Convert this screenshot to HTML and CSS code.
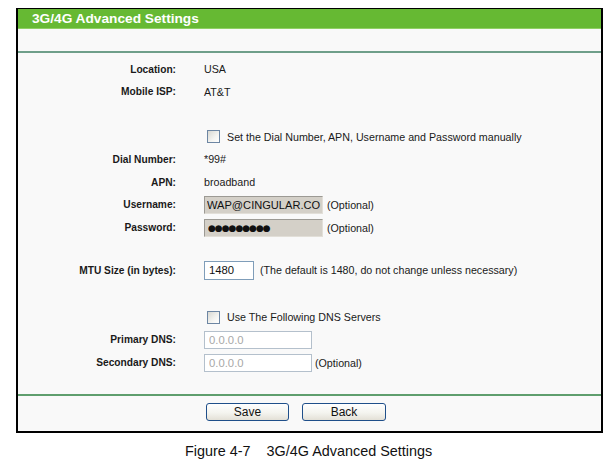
FILE: index.html
```html
<!DOCTYPE html>
<html lang="en">
<head>
<meta charset="utf-8">
<title>3G/4G Advanced Settings</title>
<link rel="stylesheet" href="styles.css">
</head>
<body>
<div class="frame">
  <div class="title">3G/4G Advanced Settings</div>
  <div class="blank"></div>
  <div class="form">
    <div class="row"><span class="label">Location:</span><span class="value">USA</span></div>
    <div class="row"><span class="label">Mobile ISP:</span><span class="value">AT&amp;T</span></div>
    <div class="spacer sp1"></div>
    <div class="row"><span class="label"></span><label class="value check"><input type="checkbox" class="cb"><span>Set the Dial Number, APN, Username and Password manually</span></label></div>
    <div class="row"><span class="label">Dial Number:</span><span class="value">*99#</span></div>
    <div class="row"><span class="label">APN:</span><span class="value">broadband</span></div>
    <div class="row"><span class="label">Username:</span><span class="value"><input class="txt grey" type="text" value="WAP@CINGULAR.CO" readonly><span class="note">(Optional)</span></span></div>
    <div class="row"><span class="label">Password:</span><span class="value"><input class="txt grey pw" type="text" value="●●●●●●●●●" readonly><span class="note">(Optional)</span></span></div>
    <div class="spacer sp2"></div>
    <div class="row"><span class="label">MTU Size (in bytes):</span><span class="value"><input class="txt mtu" type="text" value="1480"><span class="note wide">(The default is 1480, do not change unless necessary)</span></span></div>
    <div class="spacer sp3"></div>
    <div class="row"><span class="label"></span><label class="value check"><input type="checkbox" class="cb"><span>Use The Following DNS Servers</span></label></div>
    <div class="row"><span class="label">Primary DNS:</span><span class="value"><input class="txt dns" type="text" value="0.0.0.0" disabled></span></div>
    <div class="row"><span class="label">Secondary DNS:</span><span class="value"><input class="txt dns" type="text" value="0.0.0.0" disabled><span class="note tight">(Optional)</span></span></div>
  </div>
  <div class="actions">
    <span class="label"></span>
    <span class="buttons"><button class="btn" type="button">Save</button><button class="btn back" type="button">Back</button></span>
  </div>
</div>
<p class="caption"><span class="fig">Figure 4-7</span><span>3G/4G Advanced Settings</span></p>
</body>
</html>
```

FILE: styles.css
```css
html, body {
  margin: 0;
  padding: 0;
  background: #ffffff;
}

body {
  font-family: "Liberation Sans", Arial, sans-serif;
  color: #1e1e1e;
}

.frame {
  margin: 8px 0 0 16px;
  width: 583px;
  border-style: solid;
  border-color: #000;
  border-width: 1px 2px 2px 2px;
  background: #f9f9f9;
}

.title {
  height: 19px;
  line-height: 19px;
  background: #66b933;
  border-bottom: 1px solid #8fcf63;
  color: #ffffff;
  font-weight: bold;
  font-size: 13.7px;
  padding-left: 14px;
}

.blank {
  height: 22px;
  border-bottom: 2px solid #6f9f8a;
}

.form {
  padding: 4.75px 0 20px 0;
  border-bottom: 2px solid #5f9e6e;
}

.row {
  display: grid;
  grid-template-columns: 158px 1fr;
  column-gap: 28px;
  height: 22.8px;
  align-items: center;
}

.label {
  text-align: right;
  font-weight: bold;
  font-size: 10.2px;
  color: #1a1a1a;
}

.value {
  display: flex;
  align-items: center;
  font-size: 10.7px;
  color: #1a1a1a;
}

.spacer.sp1 { height: 21.8px; }
.spacer.sp2 { height: 19.5px; }
.spacer.sp3 { height: 24.2px; }

.check {
  padding-left: 3px;
}

.cb {
  appearance: none;
  -webkit-appearance: none;
  margin: 0 7px 0 0;
  width: 13px;
  height: 13px;
  box-sizing: border-box;
  border: 1px solid #6d86a3;
  background: linear-gradient(135deg, #d8d8d2 0%, #f4f4f1 60%, #ffffff 100%);
}

.txt {
  box-sizing: border-box;
  height: 18px;
  margin: 0;
  padding: 0 0 0 3px;
  border: 1px solid #a0a0a0;
  font-family: "Liberation Sans", Arial, sans-serif;
  font-size: 11.3px;
  color: #111;
  outline: none;
}

.grey {
  width: 119px;
  background: #d4d0c8;
  border-color: #9c9a94 #e2dfd8 #e2dfd8 #9c9a94;
  font-size: 11.1px;
  padding-left: 2px;
}

.pw {
  font-family: "DejaVu Sans", sans-serif;
  font-size: 9px;
  letter-spacing: -1px;
  padding-left: 3px;
}

.mtu {
  width: 50px;
  height: 19px;
  background: #ffffff;
  border-color: #7f9db9;
  padding-left: 4px;
}

.dns {
  width: 108px;
  background: #ffffff;
  border-color: #b4c0cc;
  color: #a8a8a8;
  padding-left: 4px;
  opacity: 1;
}

.dns:disabled {
  background-color: #ffffff;
  color: #a8a8a8;
  -webkit-text-fill-color: #a8a8a8;
}

.note {
  margin-left: 4px;
}

.note.wide {
  margin-left: 6px;
}

.note.tight {
  margin-left: 3px;
}

.actions {
  display: grid;
  grid-template-columns: 158px 1fr;
  column-gap: 28px;
  height: 35px;
  padding-top: 7px;
  box-sizing: border-box;
}

.buttons {
  display: flex;
  gap: 13px;
  padding-left: 2px;
  align-items: flex-start;
}

.btn {
  width: 83px;
  height: 18px;
  box-sizing: border-box;
  padding: 0;
  border: 1px solid #1f4f8a;
  border-radius: 3px;
  background: linear-gradient(#ffffff 0%, #f4f4ef 55%, #e3e0d6 100%);
  font-family: "Liberation Sans", Arial, sans-serif;
  font-size: 12px;
  line-height: 16px;
  color: #111;
}

.btn.back {
  width: 84px;
}

.caption {
  margin: 10px 0 0 185px;
  font-size: 14.4px;
  line-height: 16px;
  color: #111;
}

.caption .fig {
  margin-right: 16px;
}
```
